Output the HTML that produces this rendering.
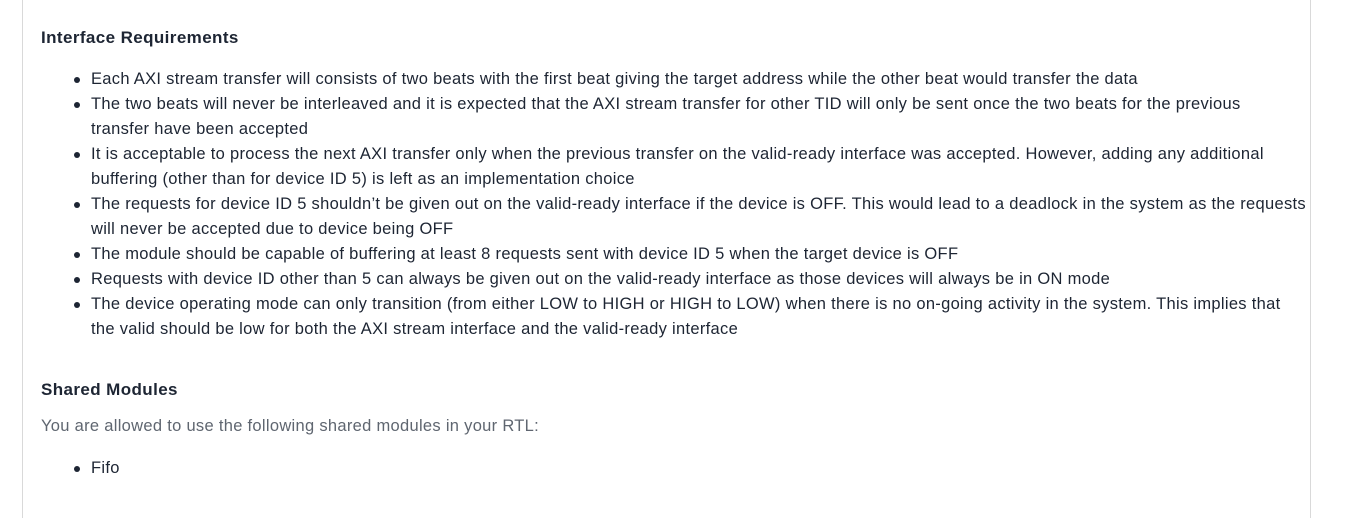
<!DOCTYPE html>
<html><head><meta charset="utf-8"><style>
html,body{margin:0;padding:0;background:#fff;}
body{width:1347px;height:497px;overflow:hidden;position:relative;font-family:"Liberation Sans",sans-serif;color:#1d2533;}
.box{position:absolute;left:22px;top:-2px;width:1287px;height:520px;border-left:1px solid #d9d9d9;border-right:1px solid #d9d9d9;}
.l{position:absolute;white-space:nowrap;font-size:16.5px;line-height:25px;letter-spacing:0.3px;}
.h{position:absolute;left:41px;font-weight:bold;font-size:17px;line-height:25px;letter-spacing:0.4px;}
.b::before{content:"";position:absolute;left:-17px;top:10px;width:6px;height:6px;border-radius:50%;background:#1d2533;}
</style></head><body>
<div class="box"></div>
<div class="h" style="top:25px">Interface Requirements</div>
<div class="l b" style="left:91px;top:67px">Each AXI stream transfer will consists of two beats with the first beat giving the target address while the other beat would transfer the data</div>
<div class="l b" style="left:91px;top:92px">The two beats will never be interleaved and it is expected that the AXI stream transfer for other TID will only be sent once the two beats for the previous</div>
<div class="l" style="left:91px;top:117px">transfer have been accepted</div>
<div class="l b" style="left:91px;top:142px">It is acceptable to process the next AXI transfer only when the previous transfer on the valid-ready interface was accepted. However, adding any additional</div>
<div class="l" style="left:91px;top:167px">buffering (other than for device ID 5) is left as an implementation choice</div>
<div class="l b" style="left:91px;top:192px">The requests for device ID 5 shouldn’t be given out on the valid-ready interface if the device is OFF. This would lead to a deadlock in the system as the requests</div>
<div class="l" style="left:91px;top:217px">will never be accepted due to device being OFF</div>
<div class="l b" style="left:91px;top:242px">The module should be capable of buffering at least 8 requests sent with device ID 5 when the target device is OFF</div>
<div class="l b" style="left:91px;top:267px">Requests with device ID other than 5 can always be given out on the valid-ready interface as those devices will always be in ON mode</div>
<div class="l b" style="left:91px;top:292px">The device operating mode can only transition (from either LOW to HIGH or HIGH to LOW) when there is no on-going activity in the system. This implies that</div>
<div class="l" style="left:91px;top:317px">the valid should be low for both the AXI stream interface and the valid-ready interface</div>
<div class="h" style="top:377px">Shared Modules</div>
<div class="l" style="left:41px;top:414px;color:#5f6670">You are allowed to use the following shared modules in your RTL:</div>
<div class="l b" style="left:91px;top:456px">Fifo</div>
</body></html>
